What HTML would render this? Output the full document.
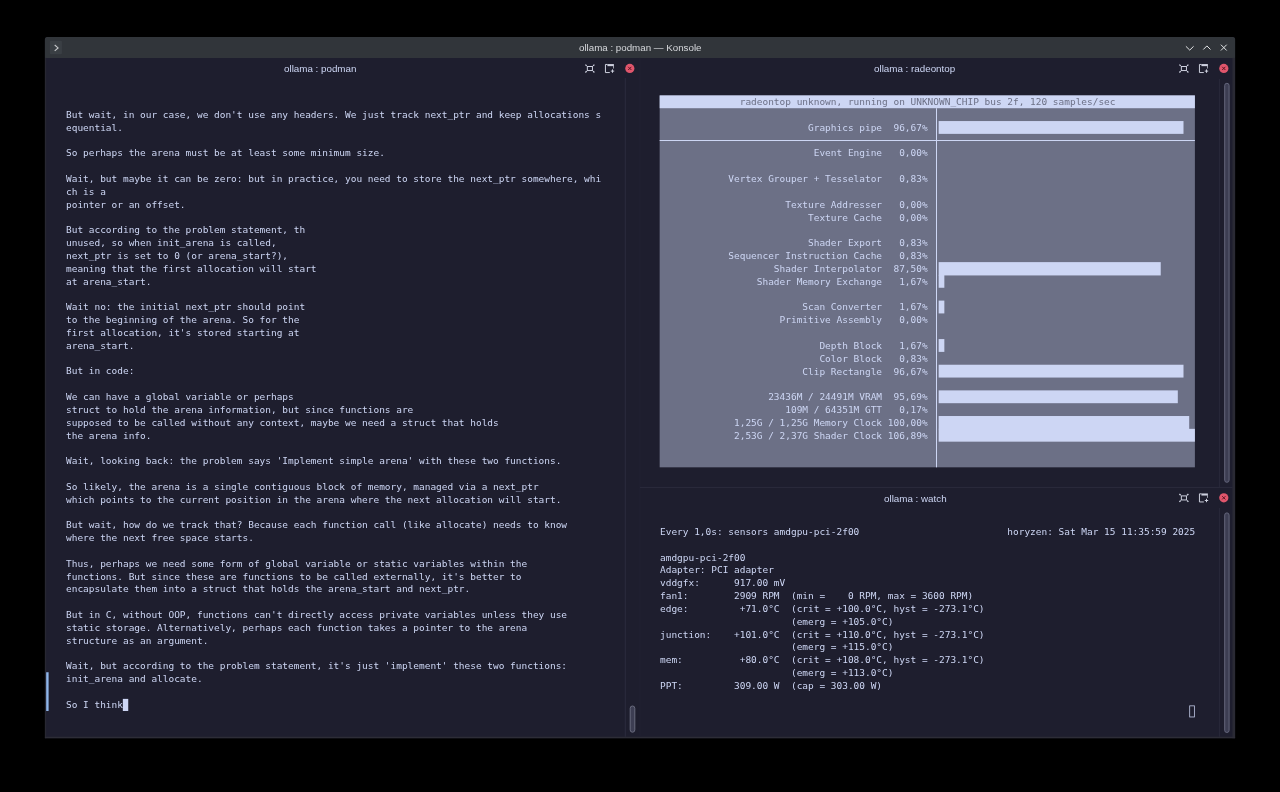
<!DOCTYPE html><html><head><meta charset="utf-8"><title>ollama : podman — Konsole</title><style>
*{margin:0;padding:0;box-sizing:border-box}
html,body{width:1280px;height:792px;overflow:hidden;background:#000}
body{position:relative;font-family:"Liberation Sans",sans-serif}
pre,.ttl,.ph{will-change:transform}
#bg{position:absolute;left:0;top:0}
.ttl{position:absolute;white-space:nowrap;color:#d6d8dc;line-height:1}
.ph{position:absolute;white-space:nowrap;color:#cdd6f4;line-height:1}
pre{position:absolute;font-family:"DejaVu Sans Mono","Liberation Mono",monospace;font-size:9.47px;line-height:12.825px;color:#cdd6f4;white-space:pre;letter-spacing:-0.007px;font-kerning:none;font-variant-ligatures:none}
</style></head><body>
<svg id="bg" width="1280" height="792" viewBox="0 0 1280 792"><path d="M44.9 738.2 V39.4 Q44.9 36.9 47.4 36.9 H1232.6 Q1235.1 36.9 1235.1 39.4 V738.2 Z" fill="#1e1e2e"/>
<path d="M44.9 57.9 V39.4 Q44.9 36.9 47.4 36.9 H1232.6 Q1235.1 36.9 1235.1 39.4 V57.9 Z" fill="#31353a"/>
<rect x="1232.50" y="57.90" width="2.60" height="680.30" fill="#2a2a34"/>
<rect x="44.90" y="57.90" width="1.40" height="680.30" fill="#272731"/>
<rect x="44.90" y="736.80" width="1190.20" height="1.40" fill="#2d2d37"/>
<g transform="translate(49,40)"><rect x="0.9" y="0.8" width="12" height="13.4" rx="1" fill="#3a3f44"/><path d="M5.7 5.0 L9.1 7.9 L5.7 10.8" fill="none" stroke="#c9cbcd" stroke-width="1.05"/></g>
<g transform="translate(1180,37)" fill="none" stroke="#e2e4e6" stroke-width="1"><path d="M5.9 9.3 L9.75 13.1 L13.6 9.3"/><path d="M23.3 12.5 L26.9 8.9 L30.5 12.5"/><path d="M40.9 7.7 L46.7 13.5 M46.7 7.7 L40.9 13.5"/></g>
<g transform="translate(583.90,62.50)" fill="none" stroke="#cdd0de" stroke-width="1"><rect x="3.45" y="4" width="5.1" height="4.05"/><path d="M1.5 2.1 L2.8 3.4 M10.5 2.1 L9.2 3.4 M10.5 9.95 L9.2 8.65 M1.5 9.95 L2.8 8.65" stroke-width="1.3"/></g>
<g transform="translate(603.50,62.50)" fill="none" stroke="#cdd0de" stroke-width="1"><path d="M6.3 10.05 H1.95 V1.95 H4"/><path d="M10 3.4 V6" stroke-opacity="0.7"/><path d="M3.9 2.6 H10.4" stroke-width="2.1"/><path d="M9 6.9 V10.3 M7.3 8.6 H10.7" stroke-width="1"/></g>
<g transform="translate(623.80,62.40)"><circle cx="6" cy="6" r="4.6" fill="#e0566c"/><path d="M4.4 4.4 L7.6 7.6 M7.6 4.4 L4.4 7.6" stroke="#5e1422" stroke-width="1" fill="none"/></g>
<g transform="translate(1177.90,62.50)" fill="none" stroke="#cdd0de" stroke-width="1"><rect x="3.45" y="4" width="5.1" height="4.05"/><path d="M1.5 2.1 L2.8 3.4 M10.5 2.1 L9.2 3.4 M10.5 9.95 L9.2 8.65 M1.5 9.95 L2.8 8.65" stroke-width="1.3"/></g>
<g transform="translate(1197.50,62.50)" fill="none" stroke="#cdd0de" stroke-width="1"><path d="M6.3 10.05 H1.95 V1.95 H4"/><path d="M10 3.4 V6" stroke-opacity="0.7"/><path d="M3.9 2.6 H10.4" stroke-width="2.1"/><path d="M9 6.9 V10.3 M7.3 8.6 H10.7" stroke-width="1"/></g>
<g transform="translate(1217.80,62.40)"><circle cx="6" cy="6" r="4.6" fill="#e0566c"/><path d="M4.4 4.4 L7.6 7.6 M7.6 4.4 L4.4 7.6" stroke="#5e1422" stroke-width="1" fill="none"/></g>
<g transform="translate(1177.90,491.90)" fill="none" stroke="#cdd0de" stroke-width="1"><rect x="3.45" y="4" width="5.1" height="4.05"/><path d="M1.5 2.1 L2.8 3.4 M10.5 2.1 L9.2 3.4 M10.5 9.95 L9.2 8.65 M1.5 9.95 L2.8 8.65" stroke-width="1.3"/></g>
<g transform="translate(1197.50,491.90)" fill="none" stroke="#cdd0de" stroke-width="1"><path d="M6.3 10.05 H1.95 V1.95 H4"/><path d="M10 3.4 V6" stroke-opacity="0.7"/><path d="M3.9 2.6 H10.4" stroke-width="2.1"/><path d="M9 6.9 V10.3 M7.3 8.6 H10.7" stroke-width="1"/></g>
<g transform="translate(1217.80,491.80)"><circle cx="6" cy="6" r="4.6" fill="#e0566c"/><path d="M4.4 4.4 L7.6 7.6 M7.6 4.4 L4.4 7.6" stroke="#5e1422" stroke-width="1" fill="none"/></g>
<rect x="639.40" y="57.90" width="1.00" height="678.90" fill="#222233"/>
<rect x="640.00" y="486.90" width="592.50" height="1.00" fill="#2b2b3c"/>
<rect x="624.70" y="78.00" width="1.30" height="658.80" fill="#28283a"/>
<rect x="1218.90" y="79.00" width="1.00" height="408.00" fill="#29293a"/>
<rect x="1218.90" y="508.00" width="1.00" height="228.80" fill="#29293a"/>
<rect x="630.20" y="706.00" width="4.60" height="26.20" rx="2.30" fill="#3d3e53" stroke="#696b7e" stroke-width="1"/>
<rect x="1224.70" y="83.30" width="4.40" height="399.00" rx="2.20" fill="#3d3e53" stroke="#64667c" stroke-width="1"/>
<rect x="1224.70" y="512.90" width="4.40" height="219.60" rx="2.20" fill="#3d3e53" stroke="#64667c" stroke-width="1"/>
<rect x="46.20" y="672.23" width="2.40" height="38.77" fill="#8fb6ea"/>
<rect x="122.84" y="698.88" width="5.39" height="12.12" fill="#cdd6f4"/>
<rect x="659.65" y="95.40" width="535.24" height="371.92" fill="#6c7086"/>
<rect x="659.65" y="95.40" width="535.24" height="12.82" fill="#cdd6f4"/>
<rect x="659.65" y="140.00" width="535.24" height="1.00" fill="#cdd6f4"/>
<rect x="936.00" y="108.23" width="1.00" height="359.10" fill="#cdd6f4"/>
<rect x="938.66" y="121.05" width="244.84" height="12.82" fill="#cdd6f4"/>
<rect x="938.66" y="262.12" width="222.07" height="13.32" fill="#cdd6f4"/>
<rect x="938.66" y="274.95" width="5.69" height="12.82" fill="#cdd6f4"/>
<rect x="938.66" y="300.60" width="5.69" height="12.82" fill="#cdd6f4"/>
<rect x="938.66" y="339.07" width="5.69" height="12.82" fill="#cdd6f4"/>
<rect x="938.66" y="364.73" width="244.84" height="12.82" fill="#cdd6f4"/>
<rect x="938.66" y="390.38" width="239.15" height="12.82" fill="#cdd6f4"/>
<rect x="938.66" y="416.02" width="250.54" height="13.32" fill="#cdd6f4"/>
<rect x="938.66" y="428.85" width="256.23" height="12.82" fill="#cdd6f4"/>
<rect x="1189.69" y="705.85" width="4.69" height="11.12" fill="none" stroke="#c3cbe8" stroke-width="0.8"/></svg>
<div class="ttl" id="title" style="left:579px;top:42.8px;font-size:9.75px">ollama : podman — Konsole</div>
<div class="ph" id="ph1" style="left:283.6px;top:64px;font-size:9.8px">ollama : podman</div>
<div class="ph" id="ph2" style="left:873.7px;top:64px;font-size:9.8px">ollama : radeontop</div>
<div class="ph" id="ph3" style="left:883.7px;top:493.5px;font-size:9.8px">ollama : watch</div>
<pre id="lt" style="left:65.9px;top:96.0px">

But wait, in our case, we don't use any headers. We just track next_ptr and keep allocations s
equential.

So perhaps the arena must be at least some minimum size.

Wait, but maybe it can be zero: but in practice, you need to store the next_ptr somewhere, whi
ch is a
pointer or an offset.

But according to the problem statement, th
unused, so when init_arena is called,
next_ptr is set to 0 (or arena_start?),
meaning that the first allocation will start
at arena_start.

Wait no: the initial next_ptr should point
to the beginning of the arena. So for the
first allocation, it's stored starting at
arena_start.

But in code:

We can have a global variable or perhaps
struct to hold the arena information, but since functions are
supposed to be called without any context, maybe we need a struct that holds
the arena info.

Wait, looking back: the problem says 'Implement simple arena' with these two functions.

So likely, the arena is a single contiguous block of memory, managed via a next_ptr
which points to the current position in the arena where the next allocation will start.

But wait, how do we track that? Because each function call (like allocate) needs to know
where the next free space starts.

Thus, perhaps we need some form of global variable or static variables within the
functions. But since these are functions to be called externally, it's better to
encapsulate them into a struct that holds the arena_start and next_ptr.

But in C, without OOP, functions can't directly access private variables unless they use
static storage. Alternatively, perhaps each function takes a pointer to the arena
structure as an argument.

Wait, but according to the problem statement, it's just 'implement' these two functions:
init_arena and allocate.

So I think</pre>
<pre id="rt0" style="left:659.65px;top:96.0px;color:#6c7086">
              radeontop unknown, running on UNKNOWN_CHIP bus 2f, 120 samples/sec</pre>
<pre id="rt" style="left:659.65px;top:108.83px">

                          Graphics pipe  96,67%

                           Event Engine   0,00%

            Vertex Grouper + Tesselator   0,83%

                      Texture Addresser   0,00%
                          Texture Cache   0,00%

                          Shader Export   0,83%
            Sequencer Instruction Cache   0,83%
                    Shader Interpolator  87,50%
                 Shader Memory Exchange   1,67%

                         Scan Converter   1,67%
                     Primitive Assembly   0,00%

                            Depth Block   1,67%
                            Color Block   0,83%
                         Clip Rectangle  96,67%

                   23436M / 24491M VRAM  95,69%
                      109M / 64351M GTT   0,17%
             1,25G / 1,25G Memory Clock 100,00%
             2,53G / 2,37G Shader Clock 106,89%

</pre>
<pre id="wt" style="left:659.65px;top:525.7px">
Every 1,0s: sensors amdgpu-pci-2f00                          horyzen: Sat Mar 15 11:35:59 2025

amdgpu-pci-2f00
Adapter: PCI adapter
vddgfx:      917.00 mV
fan1:        2909 RPM  (min =    0 RPM, max = 3600 RPM)
edge:         +71.0°C  (crit = +100.0°C, hyst = -273.1°C)
                       (emerg = +105.0°C)
junction:    +101.0°C  (crit = +110.0°C, hyst = -273.1°C)
                       (emerg = +115.0°C)
mem:          +80.0°C  (crit = +108.0°C, hyst = -273.1°C)
                       (emerg = +113.0°C)
PPT:         309.00 W  (cap = 303.00 W)</pre>
</body></html>
